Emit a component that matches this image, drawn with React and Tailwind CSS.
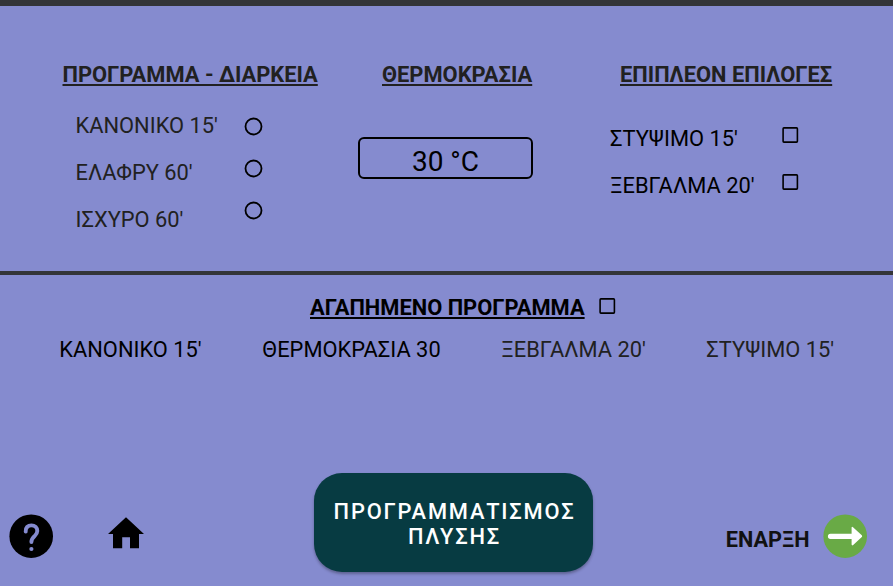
const heading = "text-[21.86px] leading-[26px] font-bold underline whitespace-nowrap";
const label = "text-[21.86px] leading-[26px] whitespace-nowrap";

function Radio() {
  return (
    <svg className="block size-[18px] overflow-visible" viewBox="0 0 18 18">
      <circle cx="8.5" cy="8.5" r="8" fill="none" stroke="#000" strokeWidth="1.8" />
    </svg>
  );
}

function Checkbox() {
  return (
    <svg className="block size-4 overflow-visible" viewBox="0 0 16 16">
      <rect x="1.1" y="0.85" width="14.3" height="14.3" rx="0.8" fill="none" stroke="#000" strokeWidth="1.6" />
    </svg>
  );
}

export default function App() {
  return (
    <div className="flex h-[586px] w-[893px] flex-col overflow-hidden bg-[#858bcf] font-['Roboto',sans-serif] text-black">
      <div className="h-1.5 shrink-0 bg-[#333538]" />

      <section className="flex h-[265px] shrink-0 pt-14 text-[#212121]">
        <div className="ml-[62.5px] w-[295.5px]">
          <h2 className={heading}>ΠΡΟΓΡΑΜΜΑ - ΔΙΑΡΚΕΙΑ</h2>
          <div className="mt-[25px] ml-[13px] flex">
            <div className="flex w-[169px] flex-col gap-[21px]">
              <span className={label}>ΚΑΝΟΝΙΚΟ 15'</span>
              <span className={label}>ΕΛΑΦΡΥ 60'</span>
              <span className={label}>ΙΣΧΥΡΟ 60'</span>
            </div>
            <div className="flex flex-col gap-6 pt-[5px]">
              <Radio />
              <Radio />
              <Radio />
            </div>
          </div>
        </div>

        <div className="w-[252px]">
          <h2 className={heading + " ml-6"}>ΘΕΡΜΟΚΡΑΣΙΑ</h2>
          <div className="mt-[49px] flex h-[42px] w-[175px] items-center justify-center rounded-md border-2 border-black pt-2 text-[28px] text-black">
            30 °C
          </div>
        </div>

        <div>
          <h2 className={heading + " ml-[10px]"}>ΕΠΙΠΛΕΟΝ ΕΠΙΛΟΓΕΣ</h2>
          <div className="mt-[38px] flex text-black">
            <div className="flex w-[172px] flex-col gap-[21px]">
              <span className={label}>ΣΤΥΨΙΜΟ 15'</span>
              <span className={label}>ΞΕΒΓΑΛΜΑ 20'</span>
            </div>
            <div className="flex flex-col gap-[31px] pt-px">
              <Checkbox />
              <Checkbox />
            </div>
          </div>
        </div>
      </section>

      <div className="h-1 shrink-0 bg-[#333538]" />

      <section className="h-[198px] shrink-0 pt-5">
        <div className="ml-[310px] flex items-start">
          <h2 className={heading + " w-[289px]"}>ΑΓΑΠΗΜΕΝΟ ΠΡΟΓΡΑΜΜΑ</h2>
          <div className="pt-[3px]">
            <Checkbox />
          </div>
        </div>
        <div className="mt-4 ml-[59.3px] flex">
          <span className={label + " w-[203px]"}>ΚΑΝΟΝΙΚΟ 15'</span>
          <span className={label + " w-[239px]"}>ΘΕΡΜΟΚΡΑΣΙΑ 30</span>
          <span className={label + " w-[205px] text-[#212121]"}>ΞΕΒΓΑΛΜΑ 20'</span>
          <span className={label + " text-[#212121]"}>ΣΤΥΨΙΜΟ 15'</span>
        </div>
      </section>

      <footer className="flex items-start">
        <svg className="mt-[41px] ml-[9px] size-11" viewBox="0 0 44 44">
          <circle cx="22.2" cy="22.2" r="21.8" fill="#000" />
          <path d="M16.7 17.6C16.3 13.6 19 11.4 22.4 11.4C25.9 11.4 28.3 13.8 28.3 17C28.3 19.4 27 20.8 25.4 22.3C23.4 24.1 22.4 25 22.4 28" fill="none" stroke="#858bcf" strokeWidth="3.9" strokeLinecap="round" />
          <circle cx="22.4" cy="35" r="2.1" fill="#858bcf" />
        </svg>
        <svg className="mt-[44px] ml-[55px] h-8 w-9" viewBox="0 0 36 32">
          <path d="M18 0.3 36 16.9H31V31.3H22V20.3H14.2V31.3H5V16.9H0Z" fill="#000" />
        </svg>
        <button className="ml-[170px] h-[99px] w-[279px] rounded-[28px] bg-[#073b42] pt-[3px] pl-[2px] text-[21.86px] leading-[25.5px] font-medium tracking-[1.8px] text-white shadow-[0_2px_3px_rgba(0,0,0,0.3)]">
          ΠΡΟΓΡΑΜΜΑΤΙΣΜΟΣ
          <br />
          ΠΛΥΣΗΣ
        </button>
        <span className="mt-[54px] ml-[132.7px] w-[97.3px] text-[21.7px] leading-[26px] font-bold whitespace-nowrap text-[#111]">ΕΝΑΡΞΗ</span>
        <svg className="mt-[41px] size-11 shrink-0" viewBox="0 0 44 44">
          <circle cx="22.2" cy="22.2" r="21.8" fill="#69aa46" />
          <path d="M7.5 19.7H28.6V13.6Q28.8 12.2 30 13.2L38.8 21.2Q39.6 22.1 38.8 23L30.2 31Q28.8 32 28.6 30.6V24.9H7.5A2.6 2.6 0 0 1 7.5 19.7Z" fill="#fff" />
        </svg>
      </footer>
    </div>
  );
}
